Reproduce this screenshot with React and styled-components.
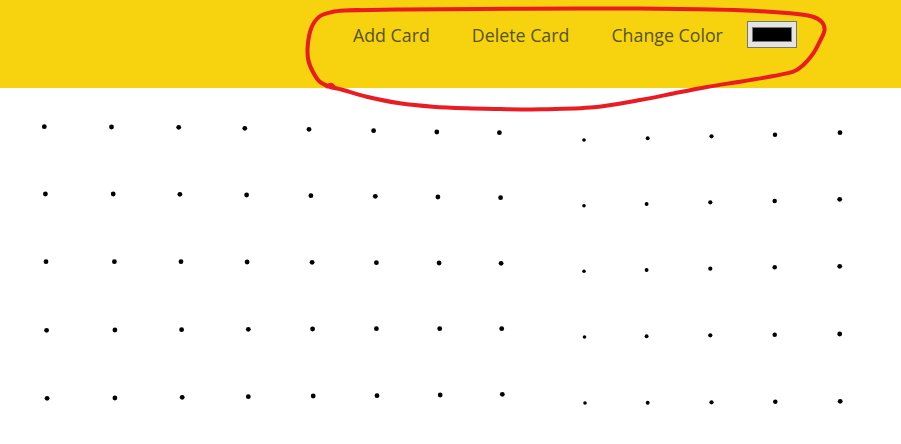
import React from "react";
import styled, { createGlobalStyle } from "styled-components";

const GlobalStyle = createGlobalStyle`
  html, body { margin: 0; padding: 0; background: #ffffff; }
  body { font-family: "Open Sans", "Noto Sans", "Liberation Sans", sans-serif; }
`;

const Page = styled.div`
  position: relative;
  width: 901px;
  height: 444px;
  overflow: hidden;
  background: #ffffff;
`;

const Header = styled.header`
  height: 88px;
  box-sizing: border-box;
  background: #f7d20f;
  display: flex;
  align-items: flex-start;
  padding: 21px 0 0 353px;
`;

const Nav = styled.nav`
  display: flex;
  align-items: center;
  gap: 42px;
`;

const NavItem = styled.span`
  font-size: 17.8px;
  line-height: 24px;
  color: #56531a;
  white-space: nowrap;
  cursor: pointer;
  margin-right: ${(p) => (p.$tight ? "-18px" : "0")};
`;

const ColorButton = styled.span`
  display: inline-flex;
  box-sizing: border-box;
  width: 50px;
  height: 27px;
  padding: 5px 4px;
  border: 1px solid #767676;
  background: #e4e4e4;
`;

const ColorChip = styled.span`
  display: block;
  flex: 1;
  border: 1px solid #777777;
  background: ${(p) => p.$color};
`;

const Board = styled.section`
  height: 356px;
`;

const BoardCanvas = styled.svg`
  display: block;
  width: 901px;
  height: 356px;
`;

const Annotation = styled.svg`
  position: absolute;
  left: 0;
  top: 0;
  width: 901px;
  height: 444px;
  pointer-events: none;
`;

const leftRows = [
  { x: [44.3, 111.5, 178.7, 244.8, 309, 373.6, 436.8, 499.4], y: [126.7, 127, 127.3, 128.3, 129.3, 130.7, 132, 132.7] },
  { x: [45.4, 113.2, 179.9, 246.6, 310.9, 375.3, 437.9, 500.6], y: [194, 194, 194.3, 195, 195.7, 196.3, 197, 197.7] },
  { x: [46, 114.4, 181, 247.1, 312.1, 376.4, 439.1, 501.1], y: [261.7, 261.7, 261.7, 262, 262.3, 262.7, 263, 263.3] },
  { x: [46.6, 114.9, 181.6, 248.3, 312.6, 376.4, 439.7, 501.7], y: [330.3, 330, 329.7, 329.3, 329, 328.7, 328.7, 328.7] },
  { x: [47.1, 114.9, 182.2, 248.3, 313.2, 377, 440.2, 502.3], y: [398.3, 398, 397.3, 396.7, 396, 395.7, 395, 394.3] },
];

const rightRows = [
  { x: [584, 647.7, 711.5, 775, 840], y: [140, 138.3, 136.3, 134.7, 132.7] },
  { x: [584, 646.6, 710.3, 774.7, 839.7], y: [205.7, 204, 202.3, 201, 199.3] },
  { x: [584, 646.6, 710.3, 774.7, 839.7], y: [271.3, 270, 268.7, 267.3, 266.3] },
  { x: [584.5, 646.6, 710.3, 774.7, 839.7], y: [337, 336.3, 335.3, 334.7, 334] },
  { x: [585, 647.7, 711.5, 775.3, 840.2], y: [403, 402.7, 402.3, 401.7, 401.3] },
];

const rightRadius = [1.8, 1.95, 2.1, 2.25, 2.4];
const BOARD_TOP = 88;

const loop = [
  [345, 10.5], [400, 9.5], [480, 9], [577, 8.5], [640, 8.5], [700, 9.3], [740, 10.2],
  [790, 13.3], [812, 16.5], [821.5, 21.7], [824.5, 30], [820.5, 40], [813.3, 53.3],
  [803.3, 65], [793.3, 71.7], [773.3, 76], [740, 81.7], [706.7, 87], [673.3, 93.5],
  [640, 100], [594, 107.3], [542, 109.3], [500, 109], [466.7, 108.3], [433, 106.7],
  [400, 103.3], [366.7, 96.7], [343, 90], [329, 86.5], [319.5, 81.5], [313, 72],
  [308.3, 60], [307.8, 45], [311.5, 27.5], [319.5, 16.5], [332, 12], [345, 10.5], [360, 10],
];

function smoothPath(pts) {
  let d = `M ${pts[0][0]} ${pts[0][1]}`;
  for (let i = 0; i < pts.length - 1; i++) {
    const p0 = pts[i - 1] || pts[i];
    const p1 = pts[i];
    const p2 = pts[i + 1];
    const p3 = pts[i + 2] || p2;
    const c1x = p1[0] + (p2[0] - p0[0]) / 6;
    const c1y = p1[1] + (p2[1] - p0[1]) / 6;
    const c2x = p2[0] - (p3[0] - p1[0]) / 6;
    const c2y = p2[1] - (p3[1] - p1[1]) / 6;
    d += ` C ${c1x.toFixed(1)} ${c1y.toFixed(1)} ${c2x.toFixed(1)} ${c2y.toFixed(1)} ${p2[0]} ${p2[1]}`;
  }
  return d;
}

export default function App() {
  return (
    <Page>
      <GlobalStyle />
      <Header>
        <Nav>
          <NavItem>Add Card</NavItem>
          <NavItem>Delete Card</NavItem>
          <NavItem $tight>Change Color</NavItem>
          <ColorButton title="Change Color">
            <ColorChip $color="#000000" />
          </ColorButton>
        </Nav>
      </Header>
      <Board>
        <BoardCanvas viewBox={`0 ${BOARD_TOP} 901 356`}>
          {leftRows.map((row, r) =>
            row.x.map((x, i) => (
              <circle key={`l${r}-${i}`} cx={x} cy={row.y[i]} r={2.4} fill="#000" />
            ))
          )}
          {rightRows.map((row, r) =>
            row.x.map((x, i) => (
              <circle key={`r${r}-${i}`} cx={x} cy={row.y[i]} r={rightRadius[i]} fill="#000" />
            ))
          )}
        </BoardCanvas>
      </Board>
      <Annotation viewBox="0 0 901 444">
        <path
          d={smoothPath(loop)}
          fill="none"
          stroke="#e81c22"
          strokeWidth="4"
          strokeLinecap="round"
          strokeLinejoin="round"
        />
        <path
          d="M 327 87 Q 331 81 335 88"
          fill="none"
          stroke="#e81c22"
          strokeWidth="3"
          strokeLinecap="round"
        />
      </Annotation>
    </Page>
  );
}
